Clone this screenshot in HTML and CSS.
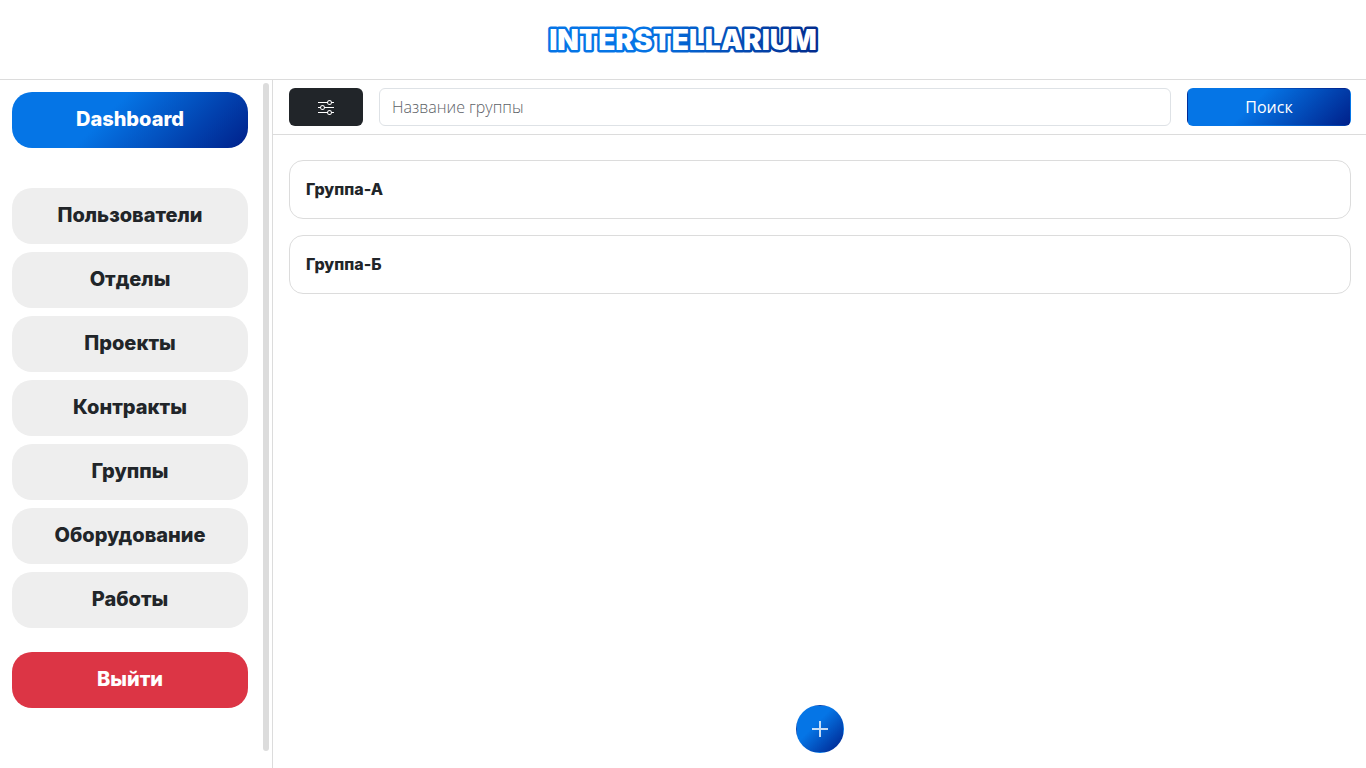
FILE: index.html
```html
<!DOCTYPE html>
<html lang="ru">
<head>
<meta charset="utf-8">
<title>Interstellarium</title>
<link rel="stylesheet" href="styles.css">
</head>
<body>
<header class="header">
  <a class="logo" href="#" aria-label="Interstellarium">
    <svg width="280" height="40" viewBox="0 0 280 40">
      <defs>
        <linearGradient id="logo-gradient" gradientUnits="userSpaceOnUse" x1="0" y1="0" x2="280" y2="0">
          <stop offset="0.35" stop-color="#0575e6"/>
          <stop offset="1" stop-color="#02298a"/>
        </linearGradient>
      </defs>
      <text class="logo-text" x="140" y="30" text-anchor="middle">INTERSTELLARIUM</text>
    </svg>
  </a>
</header>
<div class="layout">
  <aside class="sidebar">
    <nav class="nav">
      <a class="nav-link nav-link-primary" href="#">Dashboard</a>
      <a class="nav-link" href="#">Пользователи</a>
      <a class="nav-link" href="#">Отделы</a>
      <a class="nav-link" href="#">Проекты</a>
      <a class="nav-link" href="#">Контракты</a>
      <a class="nav-link" href="#">Группы</a>
      <a class="nav-link" href="#">Оборудование</a>
      <a class="nav-link" href="#">Работы</a>
      <button class="nav-link nav-link-exit" type="button">Выйти</button>
    </nav>
    <div class="scrollbar"></div>
  </aside>
  <main class="main">
    <form class="search">
      <button class="filter" type="button" aria-label="Фильтры">
        <svg width="16" height="16" viewBox="0 0 16 16" fill="currentColor">
          <path fill-rule="evenodd" d="M11.5 2a1.5 1.5 0 1 0 0 3 1.5 1.5 0 0 0 0-3M9.05 3a2.5 2.5 0 0 1 4.9 0H16v1h-2.05a2.5 2.5 0 0 1-4.9 0H0V3zM4.5 7a1.5 1.5 0 1 0 0 3 1.5 1.5 0 0 0 0-3M2.05 8a2.5 2.5 0 0 1 4.9 0H16v1H6.95a2.5 2.5 0 0 1-4.9 0H0V8zm9.45 4a1.5 1.5 0 1 0 0 3 1.5 1.5 0 0 0 0-3m-2.45 1a2.5 2.5 0 0 1 4.9 0H16v1h-2.05a2.5 2.5 0 0 1-4.9 0H0v-1z"/>
        </svg>
      </button>
      <input class="search-input" type="text" placeholder="Название группы" aria-label="Название группы">
      <button class="search-button" type="submit">Поиск</button>
    </form>
    <div class="groups">
      <a class="group" href="#">Группа-А</a>
      <a class="group" href="#">Группа-Б</a>
    </div>
    <button class="add" type="button" aria-label="Добавить группу">
      <svg width="16" height="16" viewBox="0 0 16 16" fill="none" stroke="currentColor" stroke-width="2" stroke-opacity="0.78">
        <path d="M8 0v16M0 8h7M9 8h7"/>
      </svg>
    </button>
  </main>
</div>
</body>
</html>
```
FILE: styles.css
```css
:root {
  --line: #dcdcdc;
  --dark: #212529;
  --brand: linear-gradient(135deg, #0575e6 40%, #00208a);
}

* {
  box-sizing: border-box;
}

body {
  margin: 0;
  height: 100vh;
  display: flex;
  flex-direction: column;
  background: #fff;
  color: var(--dark);
  font: 16px/24px "Open Sans", "Noto Sans", sans-serif;
}

button,
input {
  font: inherit;
}

button {
  cursor: pointer;
}

.header {
  display: flex;
  justify-content: center;
  align-items: center;
  height: 80px;
  border-bottom: 1px solid var(--line);
}

.logo svg {
  display: block;
}

.logo-text {
  font: 900 28px "Inter", sans-serif;
  fill: #fff;
  stroke: url(#logo-gradient);
  stroke-width: 5px;
  stroke-linejoin: round;
  paint-order: stroke;
}

.layout {
  display: flex;
  flex: 1;
  min-height: 0;
}

.sidebar {
  display: flex;
  flex: none;
  width: 273px;
  padding-right: 3px;
  border-right: 1px solid var(--line);
}

.nav {
  display: flex;
  flex: 1;
  flex-direction: column;
  gap: 8px;
  padding: 12px 15px 12px 12px;
}

.nav-link {
  padding: 13px 16px 15px;
  border: 0;
  border-radius: 20px;
  background: #eee;
  color: var(--dark);
  font: 800 20px/28px "Inter", sans-serif;
  text-align: center;
  text-decoration: none;
}

.nav-link-primary {
  margin-bottom: 32px;
  background: var(--brand);
  color: #fff;
}

.nav-link-exit {
  margin-top: 16px;
  background: #dc3545;
  color: #fff;
}

.scrollbar {
  width: 6px;
  margin: 3px 0 17px;
  border-radius: 3px;
  background: var(--line);
}

.main {
  display: flex;
  flex: 1;
  flex-direction: column;
  min-width: 0;
}

.search {
  display: flex;
  gap: 16px;
  padding: 8px 15px 8px 16px;
  border-bottom: 1px solid var(--line);
}

.filter {
  display: flex;
  justify-content: center;
  align-items: center;
  width: 74px;
  border: 0;
  border-radius: 6px;
  background: var(--dark);
  color: #fff;
}

.search-input {
  flex: 1;
  min-width: 0;
  height: 38px;
  padding: 6px 12px;
  border: 1px solid #dee2e6;
  border-radius: 6px;
  color: var(--dark);
}

.search-input::placeholder {
  color: #5c6166;
  font-weight: 300;
}

.search-button {
  width: 164px;
  border: 1px solid transparent;
  border-radius: 6px;
  background: var(--brand);
  color: #fff;
}

.groups {
  display: flex;
  flex: 1;
  flex-direction: column;
  gap: 16px;
  padding: 25px 15px 16px 16px;
}

.group {
  padding: 16px;
  border: 1px solid var(--line);
  border-radius: 14px;
  color: var(--dark);
  font: 800 16px/25px "Inter", sans-serif;
  text-decoration: none;
}

.add {
  display: flex;
  justify-content: center;
  align-items: center;
  align-self: center;
  width: 48px;
  height: 48px;
  margin-bottom: 15px;
  padding: 0;
  border: 1px solid transparent;
  border-radius: 50%;
  background: var(--brand);
  color: #fff;
}
```
